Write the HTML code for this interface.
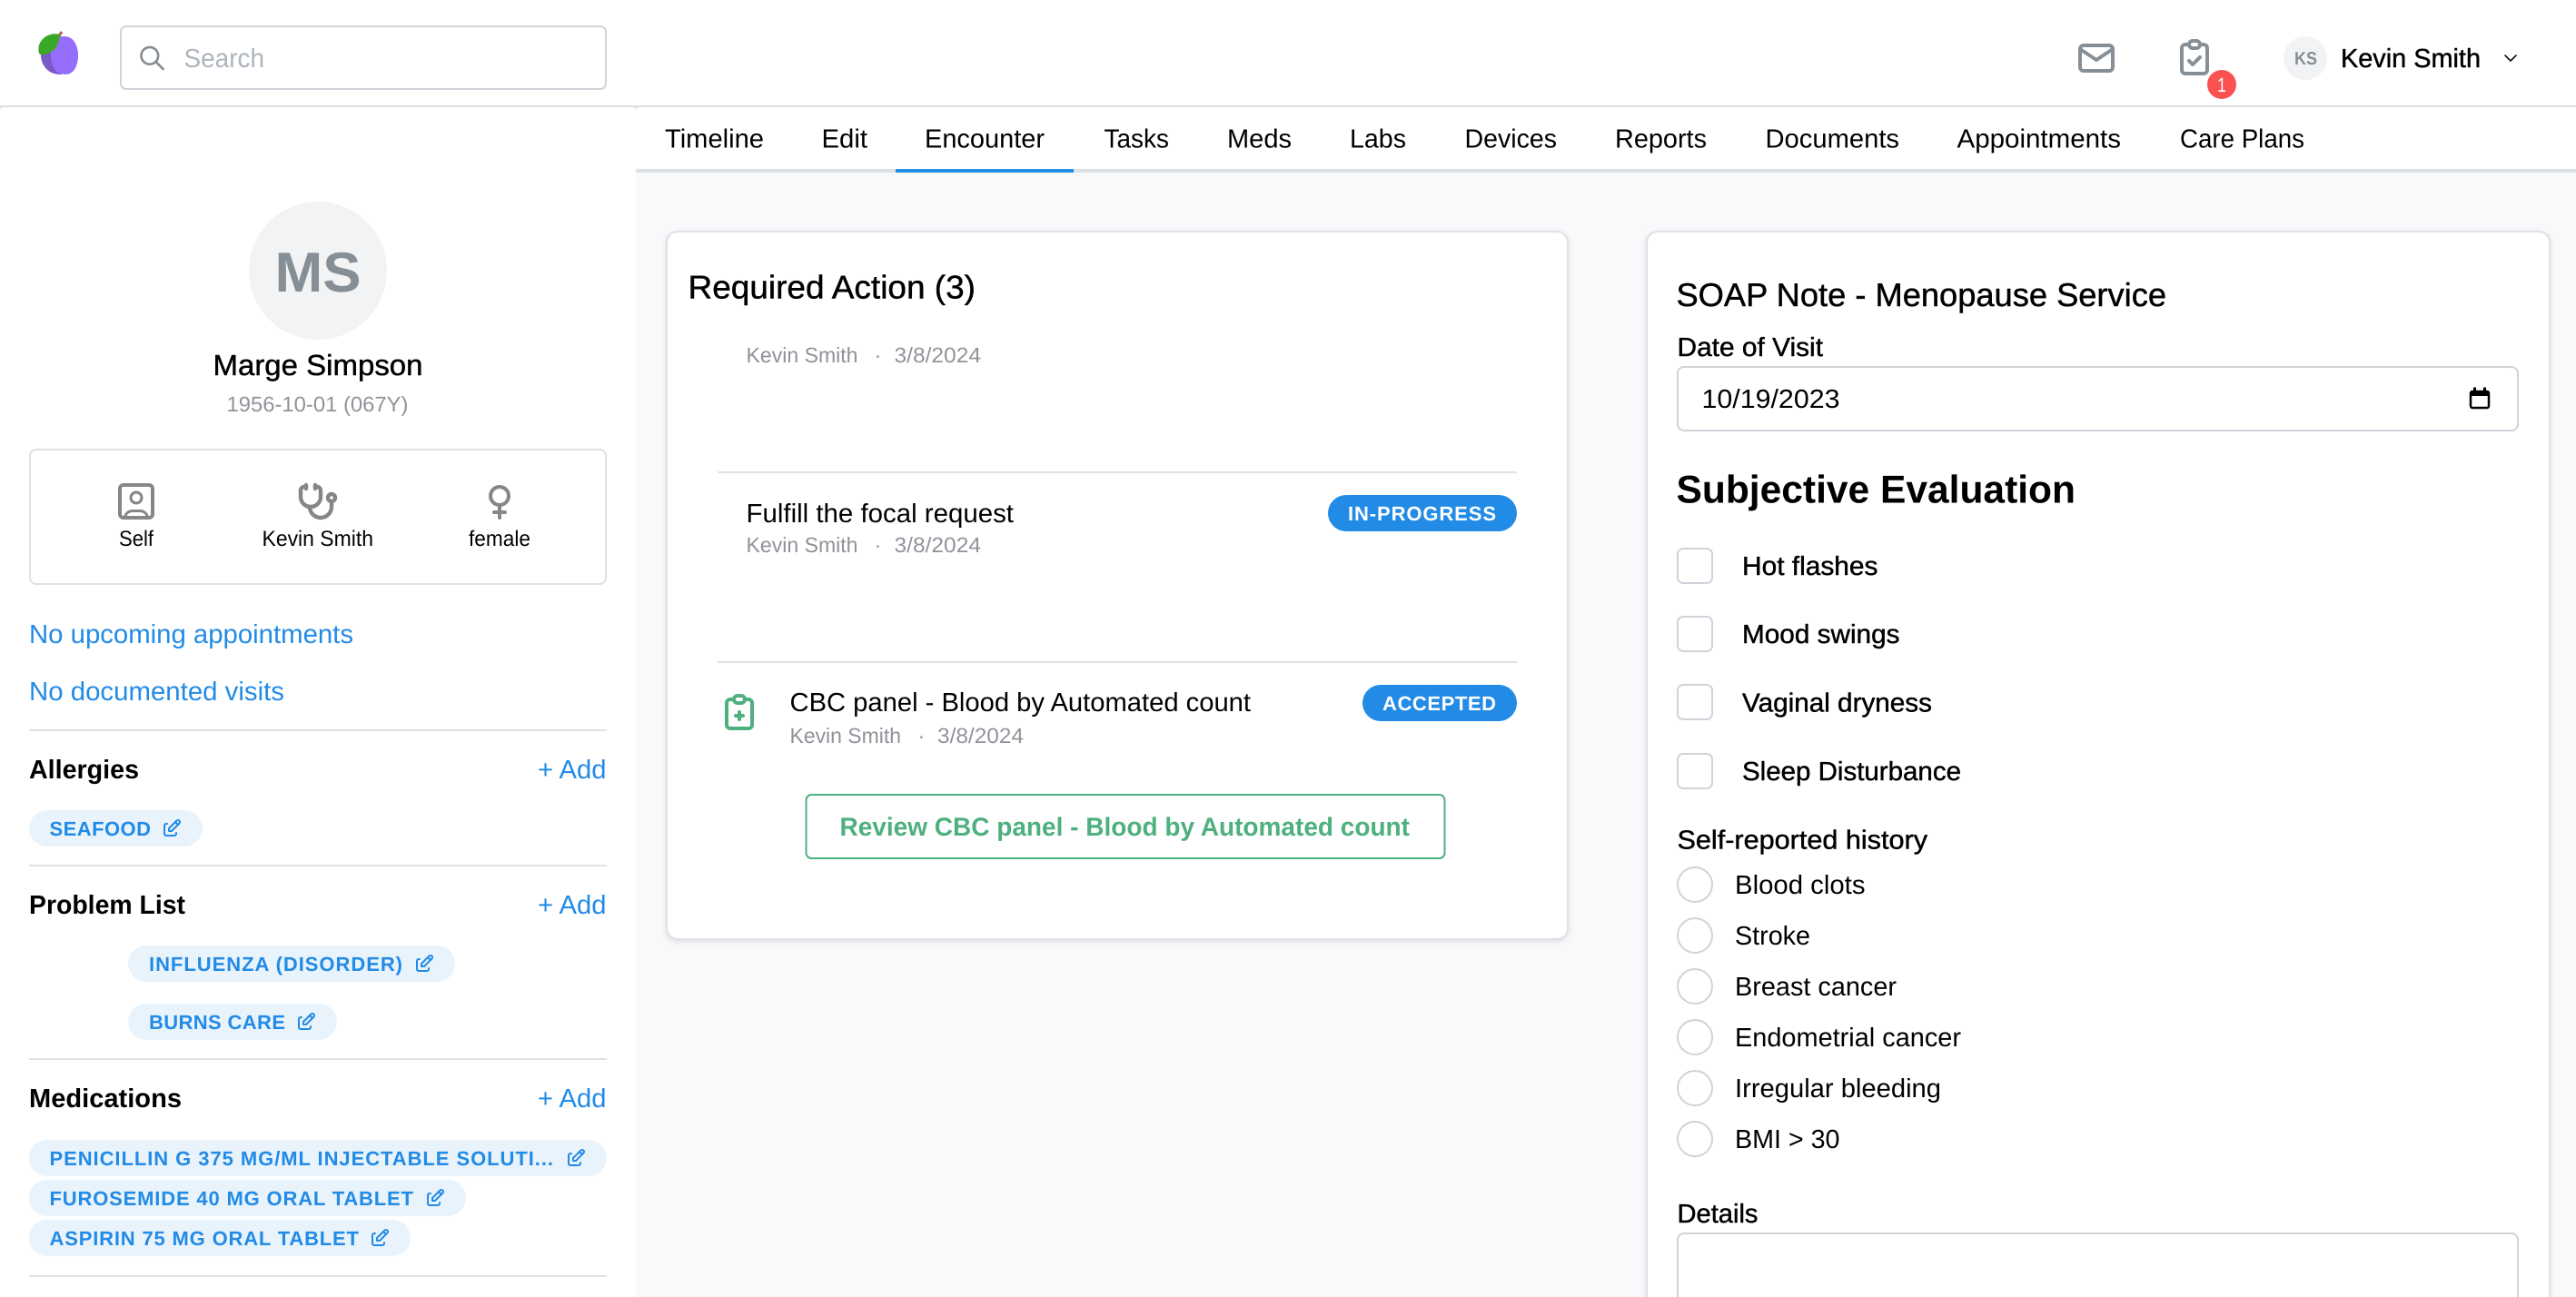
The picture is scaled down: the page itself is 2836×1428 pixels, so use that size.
<!DOCTYPE html>
<html lang="en">
<head>
<meta charset="utf-8">
<title>Marge Simpson - Encounter</title>
<style>
html,body{margin:0;padding:0;width:2836px;height:1428px;overflow:hidden;background:#fff}
svg{display:block;position:absolute;left:0;top:0}
text{font-family:"Liberation Sans",Arial,sans-serif;fill:currentColor;color:#000;font-size:29px;text-rendering:geometricPrecision;white-space:pre}
.m{stroke:currentColor;stroke-width:.45px}
.b{font-weight:700}
.meta{font-size:23.5px;color:#8f9399}
.blue{color:#228be6}
.pill{font-size:22px;font-weight:700;color:#228be6}
.lab{font-size:24px}
.ic{fill:none;stroke-linecap:round;stroke-linejoin:round}
.card{fill:#fff;stroke:#dee2e6;stroke-width:2px;filter:drop-shadow(0 2px 3px rgba(0,0,0,.1))}
</style>
</head>
<body>
<svg width="2836" height="1428" viewBox="0 0 2836 1428" xmlns="http://www.w3.org/2000/svg">
<defs>
<g id="edit" class="ic" stroke="#228be6" stroke-width="2">
<path d="M7 7h-1a2 2 0 0 0-2 2v9a2 2 0 0 0 2 2h9a2 2 0 0 0 2-2v-1"/>
<path d="M20.385 6.585a2.1 2.1 0 0 0-2.97-2.97l-8.415 8.385v3h3l8.385-8.415z"/>
<path d="M16 5l3 3"/>
</g>
</defs>

<!-- base layout -->
<rect x="0" y="116" width="2836" height="8" fill="#dee2e6"/>
<rect x="0" y="118" width="700" height="1320" rx="4" fill="#fff"/>
<rect x="700" y="118" width="2150" height="120" rx="4" fill="#fff"/>
<rect x="700" y="190" width="2136" height="1238" fill="#f8f9fa"/>
<rect x="700" y="186" width="2136" height="4" fill="#dee2e6"/>
<rect x="986" y="186" width="196" height="4" fill="#228be6"/>

<!-- logo -->
<ellipse cx="65.5" cy="61" rx="20.5" ry="21" fill="#7a5ac8"/>
<path d="M71 40C81 40 86 50 86 61C86 73 81 82 72 82C70 82 69 81 67 81C63 81 56 74 56 60C56 50 61 40 71 40Z" fill="#956ffb"/>
<path d="M64 41L68 35" stroke="#b5655a" stroke-width="3" fill="none"/>
<path d="M66 38C55 35 44 42 42.500 52C42 56 43 59 44 60C55 61 65 54 66 38Z" fill="#3aa726"/>

<!-- search -->
<rect x="133" y="29" width="534" height="69" rx="6" fill="#fff" stroke="#ced4da" stroke-width="2"/>
<g class="ic" stroke="#868e96" stroke-width="2" transform="translate(151.500 48) scale(1.333)">
<circle cx="10" cy="10" r="7"/><path d="M21 21l-6-6"/>
</g>
<text x="202.500" y="74" textLength="88.500" lengthAdjust="spacingAndGlyphs" style="color:#adb5bd">Search</text>

<!-- header right -->
<g class="ic" stroke="#868e96" stroke-width="2" transform="translate(2284 40) scale(2)">
<rect x="3" y="5" width="18" height="14" rx="2"/><path d="M3 7l9 6l9-6"/>
</g>
<g class="ic" stroke="#868e96" stroke-width="2" transform="translate(2392 39) scale(2)">
<path d="M9 5H7a2 2 0 0 0-2 2v12a2 2 0 0 0 2 2h10a2 2 0 0 0 2-2V7a2 2 0 0 0-2-2h-2"/>
<rect x="9" y="3" width="6" height="4" rx="2"/><path d="M9 14l2 2l4-4"/>
</g>
<circle cx="2446" cy="93" r="16" fill="#fa5252"/>
<text x="2441" y="101" textLength="10" lengthAdjust="spacingAndGlyphs" style="color:#fff;font-size:22px">1</text>
<circle cx="2538" cy="64" r="24" fill="#f1f3f5"/>
<text x="2526" y="71" class="b" textLength="25" lengthAdjust="spacingAndGlyphs" style="color:#868e96;font-size:20px">KS</text>
<text x="2577" y="74" class="m" textLength="154" lengthAdjust="spacingAndGlyphs">Kevin Smith</text>
<path d="M2758 61l6 6l6-6" fill="none" stroke="#111" stroke-width="1.600" stroke-linecap="round" stroke-linejoin="round"/>

<!-- tabs -->
<g>
<text x="732" y="162.500" textLength="109" lengthAdjust="spacingAndGlyphs">Timeline</text>
<text x="904.500" y="162.500" textLength="50.500" lengthAdjust="spacingAndGlyphs">Edit</text>
<text x="1018" y="162.500" textLength="132" lengthAdjust="spacingAndGlyphs">Encounter</text>
<text x="1215.500" y="162.500" textLength="71.500" lengthAdjust="spacingAndGlyphs">Tasks</text>
<text x="1351" y="162.500" textLength="71" lengthAdjust="spacingAndGlyphs">Meds</text>
<text x="1486" y="162.500" textLength="62" lengthAdjust="spacingAndGlyphs">Labs</text>
<text x="1612.500" y="162.500" textLength="101.500" lengthAdjust="spacingAndGlyphs">Devices</text>
<text x="1778" y="162.500" textLength="101" lengthAdjust="spacingAndGlyphs">Reports</text>
<text x="1943.500" y="162.500" textLength="147.500" lengthAdjust="spacingAndGlyphs">Documents</text>
<text x="2154.500" y="162.500" textLength="180.500" lengthAdjust="spacingAndGlyphs">Appointments</text>
<text x="2400" y="162.500" textLength="137" lengthAdjust="spacingAndGlyphs">Care Plans</text>
</g>

<!-- patient -->
<circle cx="350" cy="298" r="76" fill="#f1f3f5"/>
<text x="302.500" y="321" class="b" textLength="95" lengthAdjust="spacingAndGlyphs" style="color:#868e96;font-size:62px">MS</text>
<text x="234.500" y="413" class="m" textLength="231" lengthAdjust="spacingAndGlyphs" style="font-size:32px">Marge Simpson</text>
<text x="249.500" y="453" textLength="200" lengthAdjust="spacingAndGlyphs" class="meta">1956-10-01 (067Y)</text>

<rect x="33" y="495" width="634" height="148" rx="7" fill="#fff" stroke="#dee2e6" stroke-width="2"/>
<g class="ic" stroke="#868686" stroke-width="4">
<rect x="132" y="534" width="36" height="36" rx="4"/>
<circle cx="150" cy="548" r="6" stroke-width="3"/>
<path d="M137.500 570C138 565 142 562.500 146 562.500L154 562.500C158 562.500 162 565 162.500 570" stroke-width="3"/>
</g>
<g class="ic" stroke="#868686" stroke-width="2.200" transform="translate(325 528) scale(2)">
<path d="M6 4h-1a2 2 0 0 0-2 2v3.500h0a5.500 5.500 0 0 0 11 0v-3.500a2 2 0 0 0-2-2h-1"/>
<path d="M8 15a6 6 0 1 0 12 0v-3"/>
<path d="M11 3v2"/><path d="M6 3v2"/>
<circle cx="20" cy="10" r="2"/>
</g>
<g class="ic" stroke="#868686" stroke-width="2" transform="translate(526 528) scale(2)">
<circle cx="12" cy="9" r="5"/><path d="M12 14v7"/><path d="M9 18h6"/>
</g>
<text x="131" y="601" class="lab" textLength="38" lengthAdjust="spacingAndGlyphs">Self</text>
<text x="288.500" y="601" class="lab" textLength="122.500" lengthAdjust="spacingAndGlyphs">Kevin Smith</text>
<text x="516" y="601" class="lab" textLength="68" lengthAdjust="spacingAndGlyphs">female</text>

<text x="32" y="708" class="blue" textLength="357" lengthAdjust="spacingAndGlyphs">No upcoming appointments</text>
<text x="32" y="771" class="blue" textLength="281" lengthAdjust="spacingAndGlyphs">No documented visits</text>

<rect x="32" y="803" width="636" height="2" fill="#dee2e6"/>
<text x="32" y="857" class="b" textLength="121" lengthAdjust="spacingAndGlyphs">Allergies</text>
<text x="592" y="857" class="blue" textLength="75.500" lengthAdjust="spacingAndGlyphs">+ Add</text>
<rect x="32" y="892" width="191" height="40" rx="20" fill="#e9f3fc"/>
<text x="54.500" y="920" class="pill" textLength="111.500">SEAFOOD</text>
<use href="#edit" x="177" y="900"/>

<rect x="32" y="952" width="636" height="2" fill="#dee2e6"/>
<text x="32" y="1006" class="b" textLength="172" lengthAdjust="spacingAndGlyphs">Problem List</text>
<text x="592" y="1006" class="blue" textLength="75.500" lengthAdjust="spacingAndGlyphs">+ Add</text>
<rect x="141" y="1041" width="360" height="40" rx="20" fill="#e9f3fc"/>
<text x="164" y="1069" class="pill" textLength="279">INFLUENZA (DISORDER)</text>
<use href="#edit" x="455" y="1049"/>
<rect x="141" y="1105" width="230" height="40" rx="20" fill="#e9f3fc"/>
<text x="164" y="1133" class="pill" textLength="150">BURNS CARE</text>
<use href="#edit" x="325" y="1113"/>

<rect x="32" y="1165" width="636" height="2" fill="#dee2e6"/>
<text x="32" y="1219" class="b" textLength="168" lengthAdjust="spacingAndGlyphs">Medications</text>
<text x="592" y="1219" class="blue" textLength="75.500" lengthAdjust="spacingAndGlyphs">+ Add</text>
<rect x="32" y="1255" width="636" height="40" rx="20" fill="#e9f3fc"/>
<text x="54.500" y="1283" class="pill" textLength="554.500">PENICILLIN G 375 MG/ML INJECTABLE SOLUTI...</text>
<use href="#edit" x="622" y="1263"/>
<rect x="32" y="1299" width="481" height="40" rx="20" fill="#e9f3fc"/>
<text x="54.500" y="1327" class="pill" textLength="400.500">FUROSEMIDE 40 MG ORAL TABLET</text>
<use href="#edit" x="467" y="1307"/>
<rect x="32" y="1343" width="420" height="40" rx="20" fill="#e9f3fc"/>
<text x="54.500" y="1371" class="pill" textLength="340.500">ASPIRIN 75 MG ORAL TABLET</text>
<use href="#edit" x="406" y="1351"/>
<rect x="32" y="1404" width="636" height="2" fill="#dee2e6"/>

<!-- Required action card -->
<rect x="734" y="255" width="992" height="779" rx="12" class="card"/>
<text x="757.500" y="328.500" class="m" textLength="316.500" lengthAdjust="spacingAndGlyphs" style="font-size:36px">Required Action (3)</text>
<text x="821.500" y="399" class="meta" textLength="123" lengthAdjust="spacingAndGlyphs">Kevin Smith</text>
<text x="962.500" y="399" class="meta">·</text>
<text x="984.500" y="399" class="meta" textLength="95.500" lengthAdjust="spacingAndGlyphs">3/8/2024</text>
<rect x="790" y="519" width="880" height="2" fill="#dee2e6"/>
<text x="821.500" y="575" textLength="294.500" lengthAdjust="spacingAndGlyphs">Fulfill the focal request</text>
<text x="821.500" y="608" class="meta" textLength="123" lengthAdjust="spacingAndGlyphs">Kevin Smith</text>
<text x="962.500" y="608" class="meta">·</text>
<text x="984.500" y="608" class="meta" textLength="95.500" lengthAdjust="spacingAndGlyphs">3/8/2024</text>
<rect x="1462" y="545" width="208" height="40" rx="20" fill="#228be6"/>
<text x="1484" y="573" class="b" textLength="163" style="color:#fff;font-size:22px">IN-PROGRESS</text>
<rect x="790" y="728" width="880" height="2" fill="#dee2e6"/>
<g class="ic" stroke="#4fb07f" stroke-width="2" transform="translate(790 760) scale(2)">
<path d="M9 5H7a2 2 0 0 0-2 2v12a2 2 0 0 0 2 2h10a2 2 0 0 0 2-2V7a2 2 0 0 0-2-2h-2"/>
<rect x="9" y="3" width="6" height="4" rx="2"/><path d="M10 14h4"/><path d="M12 12v4"/>
</g>
<text x="869.500" y="783" textLength="507.500" lengthAdjust="spacingAndGlyphs">CBC panel - Blood by Automated count</text>
<text x="869.500" y="818" class="meta" textLength="122.500" lengthAdjust="spacingAndGlyphs">Kevin Smith</text>
<text x="1010.500" y="818" class="meta">·</text>
<text x="1032" y="818" class="meta" textLength="95" lengthAdjust="spacingAndGlyphs">3/8/2024</text>
<rect x="1500" y="754" width="170" height="40" rx="20" fill="#228be6"/>
<text x="1522" y="782" class="b" textLength="125" style="color:#fff;font-size:22px">ACCEPTED</text>
<rect x="887.500" y="875" width="703" height="70" rx="6" fill="#fff" stroke="#4fb07f" stroke-width="2"/>
<text x="924.500" y="920" class="b" textLength="627.500" lengthAdjust="spacingAndGlyphs" style="color:#4fb07f;font-size:28.500px">Review CBC panel - Blood by Automated count</text>

<!-- SOAP card -->
<rect x="1813" y="255" width="994" height="1240" rx="12" class="card"/>
<text x="1845.500" y="337" class="m" textLength="539.500" lengthAdjust="spacingAndGlyphs" style="font-size:36px">SOAP Note - Menopause Service</text>
<text x="1846.500" y="392" class="m" textLength="160.500" lengthAdjust="spacingAndGlyphs">Date of Visit</text>
<rect x="1847" y="404" width="925" height="70" rx="7" fill="#fff" stroke="#ced4da" stroke-width="2"/>
<text x="1873.500" y="449" textLength="152" lengthAdjust="spacingAndGlyphs">10/19/2023</text>
<rect x="2720" y="431" width="20" height="18" rx="2" fill="none" stroke="#000" stroke-width="2.500"/>
<rect x="2720" y="430" width="20" height="6" fill="#000"/>
<rect x="2723" y="426.500" width="3" height="4" fill="#000"/>
<rect x="2734" y="426.500" width="3" height="4" fill="#000"/>
<text x="1845.500" y="553.500" class="b" textLength="439.500" lengthAdjust="spacingAndGlyphs" style="font-size:43px">Subjective Evaluation</text>

<g fill="#fff" stroke="#ced4da" stroke-width="2">
<rect x="1847" y="604" width="38" height="38" rx="6"/>
<rect x="1847" y="679" width="38" height="38" rx="6"/>
<rect x="1847" y="754" width="38" height="38" rx="6"/>
<rect x="1847" y="830" width="38" height="38" rx="6"/>
</g>
<text x="1918" y="633" class="m" textLength="149.500" lengthAdjust="spacingAndGlyphs">Hot flashes</text>
<text x="1918" y="708" class="m" textLength="173.500" lengthAdjust="spacingAndGlyphs">Mood swings</text>
<text x="1918" y="783.700" class="m" textLength="209" lengthAdjust="spacingAndGlyphs">Vaginal dryness</text>
<text x="1918" y="859" class="m" textLength="241" lengthAdjust="spacingAndGlyphs">Sleep Disturbance</text>

<text x="1846.500" y="934.500" class="m" textLength="275.500" lengthAdjust="spacingAndGlyphs">Self-reported history</text>
<g fill="#fff" stroke="#ced4da" stroke-width="2">
<circle cx="1866" cy="974" r="19"/>
<circle cx="1866" cy="1030" r="19"/>
<circle cx="1866" cy="1086" r="19"/>
<circle cx="1866" cy="1142" r="19"/>
<circle cx="1866" cy="1198" r="19"/>
<circle cx="1866" cy="1254" r="19"/>
</g>
<text x="1910" y="984" textLength="143.500" lengthAdjust="spacingAndGlyphs">Blood clots</text>
<text x="1910" y="1040" textLength="83" lengthAdjust="spacingAndGlyphs">Stroke</text>
<text x="1910" y="1096" textLength="178" lengthAdjust="spacingAndGlyphs">Breast cancer</text>
<text x="1910" y="1152" textLength="249" lengthAdjust="spacingAndGlyphs">Endometrial cancer</text>
<text x="1910" y="1208" textLength="227" lengthAdjust="spacingAndGlyphs">Irregular bleeding</text>
<text x="1910" y="1264" textLength="115.500" lengthAdjust="spacingAndGlyphs">BMI &gt; 30</text>

<text x="1846.500" y="1346" class="m" textLength="89" lengthAdjust="spacingAndGlyphs">Details</text>
<rect x="1847" y="1358" width="925" height="120" rx="7" fill="#fff" stroke="#ced4da" stroke-width="2"/>
</svg>
</body>
</html>
